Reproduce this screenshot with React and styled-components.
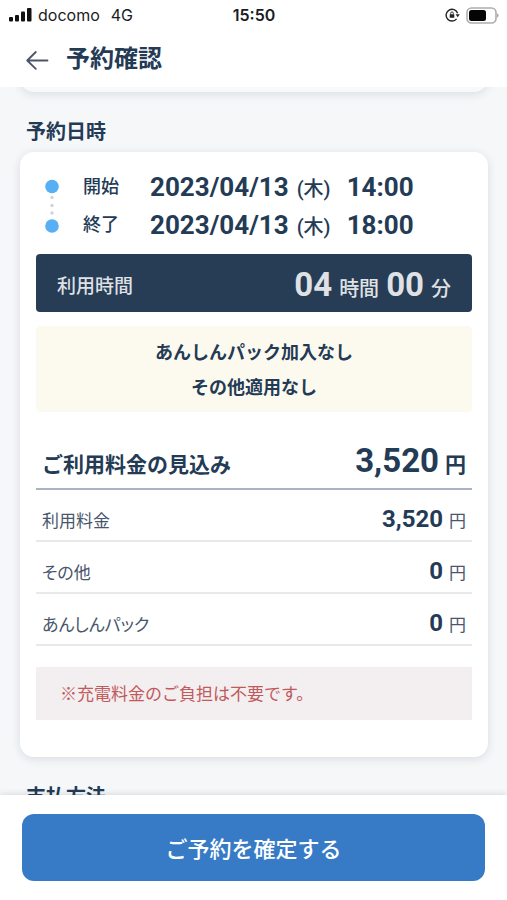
import React from "react";
import styled, { createGlobalStyle } from "styled-components";

const navy = "#243b56";

const GlobalStyle = createGlobalStyle`
  *, *::before, *::after { box-sizing: border-box; }
  body {
    margin: 0;
    color: ${navy};
    background: #f5f7f9;
    font-family: Roboto, "Noto Sans CJK JP", sans-serif;
  }
  h1, h2, p, dl, dd { margin: 0; }
`;

const Screen = styled.div`
  display: flex;
  flex-direction: column;
  height: 100vh;
`;

const StatusBar = styled.div`
  display: grid;
  grid-template-columns: 1fr auto 1fr;
  align-items: center;
  height: 30px;
  padding: 0 8px 0 9px;
  background: #fff;
  color: #1c1c1e;
  font: 400 16px/20px Inter, sans-serif;
`;

const Carrier = styled.div`
  display: flex;
  align-items: center;
  gap: 6px;
`;

const Network = styled.span`
  margin-left: 5px;
`;

const Clock = styled.time`
  font-weight: 600;
`;

const Indicators = styled.div`
  display: flex;
  justify-content: flex-end;
  align-items: center;
  gap: 6px;
`;

const TitleBar = styled.header`
  display: flex;
  align-items: center;
  gap: 16px;
  height: 57px;
  padding: 0 24px;
  background: #fff;
`;

const BackButton = styled.button`
  display: flex;
  padding: 0;
  border: 0;
  background: none;
  color: #4b5468;
`;

const Title = styled.h1`
  font-size: 24px;
  line-height: 36px;
  font-weight: 700;
`;

const Content = styled.main`
  flex: 1;
  min-height: 0;
  padding: 0 19px 0 20px;
  overflow-y: auto;
  scrollbar-width: none;
`;

const Card = styled.section`
  padding: 16px 16px 37px;
  border-radius: 14px;
  background: #fff;
  box-shadow: 0 2px 10px rgba(40, 50, 60, 0.13);
`;

const PreviousCard = styled(Card)`
  height: 53px;
  margin-top: -48px;
  background: #f8fafa;
`;

const SectionTitle = styled.h2`
  padding: 25px 6px 5px;
  font-size: 20px;
  line-height: 30px;
  font-weight: 700;
`;

const Schedule = styled.div`
  display: flex;
  align-items: center;
  gap: 24px;
  padding: 0 0 0 9px;
`;

const Dates = styled.dl`
  flex: 1;
`;

const DateRow = styled.div`
  display: flex;
  align-items: center;
  height: 38px;
`;

const DateLabel = styled.dt`
  width: 67px;
  font-size: 18px;
  line-height: 38px;
  font-weight: 500;
`;

const DateValue = styled.dd`
  display: flex;
  align-items: baseline;
  gap: 8px;
  padding-top: 2px;
  font-size: 26px;
  line-height: 38px;
  font-weight: 700;
`;

const Weekday = styled.span`
  width: 42px;
  font-size: 20px;
  font-weight: 500;
  white-space: nowrap;
`;

const Duration = styled.div`
  display: flex;
  align-items: center;
  justify-content: space-between;
  height: 58px;
  margin-top: 10px;
  padding: 2px 21px 0;
  border-radius: 4px;
  background: #273c55;
  color: #dfe1e4;
  font-size: 19px;
  font-weight: 500;
`;

const DurationValue = styled.p`
  display: flex;
  align-items: baseline;
  gap: 7px;
  font-size: 20px;
`;

const DurationNumber = styled.strong`
  font-size: 33px;
  font-weight: 700;
`;

const Options = styled.div`
  margin-top: 14px;
  padding: 9px 16px 7px;
  border-radius: 4px;
  background: #fcfaee;
  text-align: center;
  font-size: 18px;
  line-height: 35px;
  font-weight: 700;
`;

const Fees = styled.table`
  width: 100%;
  margin-top: 25px;
  border-collapse: collapse;
`;

const FeeRow = styled.tr`
  height: 52px;
  border-bottom: ${(p) => (p.$total ? "2px solid #a9b3c5" : "2px solid #e7e9eb")};
  font-size: ${(p) => (p.$total ? "21px" : "17px")};
  color: ${(p) => (p.$total ? navy : "#49566b")};
  font-weight: ${(p) => (p.$total ? 700 : 400)};

  > * {
    padding: ${(p) => (p.$total ? "4px 6px 0" : "11px 6px 0")};
    line-height: ${(p) => (p.$total ? "40px" : "36px")};
    vertical-align: baseline;
  }
`;

const FeeLabel = styled.th`
  text-align: left;
  font-weight: inherit;
  font-feature-settings: ${(p) => (p.$total ? "normal" : '"palt"')};
`;

const FeeAmount = styled.td`
  text-align: right;
`;

const Amount = styled.strong`
  margin-right: 6px;
  color: ${navy};
  font-size: ${(p) => (p.$total ? "33px" : "24px")};
  font-weight: 700;
`;

const Notice = styled.p`
  margin-top: 21px;
  padding: 13px 24px 11px;
  background: #f3eeef;
  color: #c05a5c;
  font-size: 17px;
  line-height: 29px;
`;

const Footer = styled.footer`
  position: relative;
  padding: 19px 22px;
  background: #fff;
  box-shadow: 0 -1px 6px rgba(40, 50, 60, 0.14);
`;

const ConfirmButton = styled.button`
  display: block;
  width: 100%;
  height: 67px;
  padding: 0 0 2px;
  border: 0;
  border-radius: 12px;
  background: #377bc6;
  color: #fff;
  font: inherit;
  font-size: 22px;
  font-weight: 500;
`;

const fees = [
  { label: "利用料金", amount: "3,520" },
  { label: "その他", amount: "0" },
  { label: "あんしんパック", amount: "0" },
];

const dates = [
  { label: "開始", day: "2023/04/13", time: "14:00" },
  { label: "終了", day: "2023/04/13", time: "18:00" },
];

function SignalIcon() {
  return (
    <svg width="23" height="15" viewBox="0 0 23 15" fill="#111" aria-hidden="true">
      <rect x="0" y="9" width="4" height="4.5" rx="1" />
      <rect x="6" y="7" width="4" height="6.5" rx="1" />
      <rect x="12" y="3.5" width="4" height="10" rx="1" />
      <rect x="18" y="0" width="4.5" height="13.5" rx="1" />
    </svg>
  );
}

function RotationLockIcon() {
  return (
    <svg width="15" height="14" viewBox="0 0 15 14" fill="none" stroke="#222" aria-hidden="true">
      <path d="M12.6 5.2A5.9 5.9 0 1 0 11.6 10.9" strokeWidth="1.4" />
      <path d="M10.6 6.2h4.2l-2.1 3z" fill="#222" stroke="none" />
      <rect x="4.7" y="6.2" width="4.6" height="3.6" rx=".5" fill="#222" stroke="none" />
      <path d="M5.7 6.5V5.2a1.3 1.3 0 0 1 2.6 0v1.3" strokeWidth="0.9" />
    </svg>
  );
}

function BatteryIcon() {
  return (
    <svg width="33" height="17" viewBox="0 0 33 17" fill="none" aria-hidden="true">
      <rect x="1" y="1" width="29" height="15" rx="4.5" stroke="#adadad" strokeWidth="1.6" />
      <rect x="3" y="3" width="17" height="11" rx="2.5" fill="#050505" />
      <path d="M31.2 6.3c1.8.8 1.8 3.6 0 4.4z" fill="#9a9a9a" />
    </svg>
  );
}

function BackIcon() {
  return (
    <svg width="26" height="24" viewBox="0 0 26 24" fill="none" stroke="currentColor" strokeWidth="1.8" strokeLinecap="round" strokeLinejoin="round" aria-hidden="true">
      <path d="M23.5 13.5H3.2M11.8 5L3.2 13.5L11.8 21.8" />
    </svg>
  );
}

function Timeline() {
  return (
    <svg width="14" height="54" viewBox="0 0 14 54" aria-hidden="true">
      <circle cx="7" cy="7.5" r="6.8" fill="#58b0f4" />
      <circle cx="7" cy="47" r="6.8" fill="#58b0f4" />
      <g fill="#d0d3dc">
        <circle cx="7" cy="18.5" r="1.7" />
        <circle cx="7" cy="26.5" r="1.7" />
        <circle cx="7" cy="34" r="1.7" />
      </g>
    </svg>
  );
}

export default function App() {
  return (
    <Screen>
      <GlobalStyle />
      <StatusBar>
        <Carrier>
          <SignalIcon />
          <span>docomo</span>
          <Network>4G</Network>
        </Carrier>
        <Clock>15:50</Clock>
        <Indicators>
          <RotationLockIcon />
          <BatteryIcon />
        </Indicators>
      </StatusBar>
      <TitleBar>
        <BackButton type="button" aria-label="戻る">
          <BackIcon />
        </BackButton>
        <Title>予約確認</Title>
      </TitleBar>
      <Content>
        <PreviousCard />
        <SectionTitle>予約日時</SectionTitle>
        <Card>
          <Schedule>
            <Timeline />
            <Dates>
              {dates.map((d) => (
                <DateRow key={d.label}>
                  <DateLabel>{d.label}</DateLabel>
                  <DateValue>
                    <span>{d.day}</span>
                    <Weekday>(木)</Weekday>
                    <span>{d.time}</span>
                  </DateValue>
                </DateRow>
              ))}
            </Dates>
          </Schedule>
          <Duration>
            <span>利用時間</span>
            <DurationValue>
              <DurationNumber>04</DurationNumber>
              <span>時間</span>
              <DurationNumber>00</DurationNumber>
              <span>分</span>
            </DurationValue>
          </Duration>
          <Options>
            <p>あんしんパック加入なし</p>
            <p>その他適用なし</p>
          </Options>
          <Fees>
            <tbody>
              <FeeRow $total>
                <FeeLabel scope="row" $total>ご利用料金の見込み</FeeLabel>
                <FeeAmount>
                  <Amount $total>3,520</Amount>円
                </FeeAmount>
              </FeeRow>
              {fees.map((f) => (
                <FeeRow key={f.label}>
                  <FeeLabel scope="row">{f.label}</FeeLabel>
                  <FeeAmount>
                    <Amount>{f.amount}</Amount>円
                  </FeeAmount>
                </FeeRow>
              ))}
            </tbody>
          </Fees>
          <Notice>※充電料金のご負担は不要です。</Notice>
        </Card>
        <SectionTitle>支払方法</SectionTitle>
      </Content>
      <Footer>
        <ConfirmButton type="button">ご予約を確定する</ConfirmButton>
      </Footer>
    </Screen>
  );
}
